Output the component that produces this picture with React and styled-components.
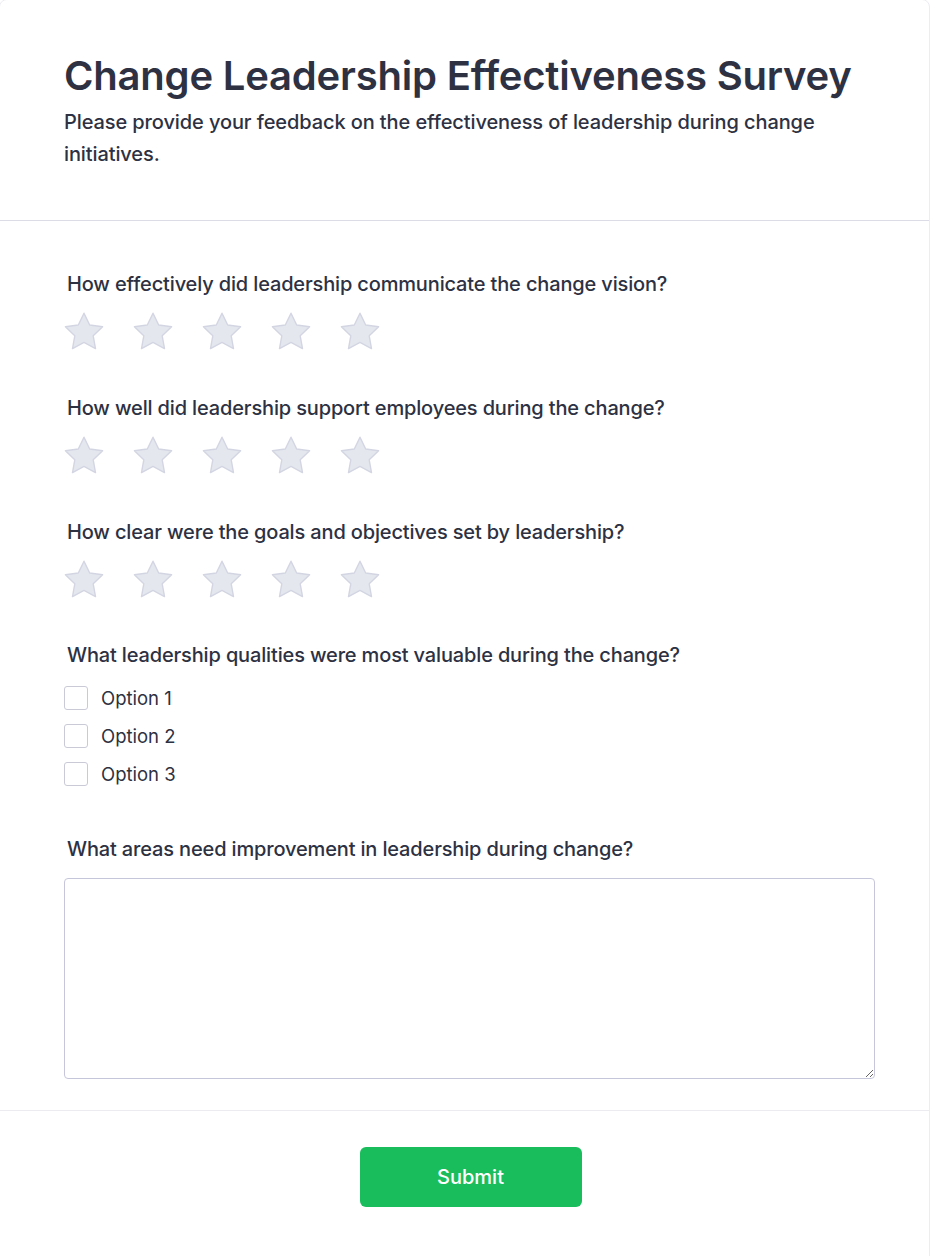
import React, { useState } from "react";
import styled, { createGlobalStyle } from "styled-components";

const GlobalStyle = createGlobalStyle`
  html, body {
    margin: 0;
    padding: 0;
    background: #fff;
  }
  body {
    font-family: Inter, "Noto Sans", Arial, sans-serif;
    color: #2d3142;
  }
  * { box-sizing: border-box; }
`;

const Card = styled.div`
  width: 931px;
  margin: -1px 0 0 -1px;
  background: #fff;
  border: 1px solid #ececf2;
  border-radius: 8px;
`;

const Header = styled.header`
  padding: 52px 64px 50px;
  border-bottom: 1px solid #dcdce6;
`;

const Title = styled.h1`
  margin: 0 0 6px;
  font-size: 40px;
  line-height: 48px;
  font-weight: 600;
  color: #2d3142;
  letter-spacing: -0.2px;
`;

const Subtitle = styled.p`
  margin: 0;
  font-size: 20px;
  line-height: 32px;
  font-weight: 500;
  letter-spacing: -0.1px;
  color: #2d3142;
`;

const Body = styled.div`
  padding: 49px 54px 31px 64px;
  border-bottom: 1px solid #ebebf0;
`;

const Question = styled.div`
  margin-bottom: ${(p) => p.$gap || 42}px;
`;

const Label = styled.div`
  padding-left: 3px;
  font-size: 20px;
  line-height: 28px;
  font-weight: 500;
  letter-spacing: -0.15px;
  color: #2d3142;
  margin-bottom: ${(p) => p.$gap || 14}px;
`;

const Stars = styled.div`
  display: flex;
  gap: 29px;
`;

const StarButton = styled.button`
  width: 40px;
  height: 40px;
  padding: 0;
  border: 0;
  background: none;
  cursor: pointer;
  display: flex;
  align-items: center;
  justify-content: center;
`;

const Options = styled.div`
  display: flex;
  flex-direction: column;
  gap: 14px;
`;

const OptionRow = styled.label`
  display: flex;
  align-items: center;
  gap: 13px;
  font-size: 18.5px;
  line-height: 24px;
  color: #2d3142;
  cursor: pointer;
`;

const Box = styled.span`
  width: 24px;
  height: 24px;
  border: 1px solid #c9cad6;
  border-radius: 3px;
  background: ${(p) => (p.$on ? "#19bd5c" : "#fff")};
`;

const TextArea = styled.textarea`
  display: block;
  width: 811px;
  height: 201px;
  border: 1px solid #c5c6da;
  border-radius: 4px;
  padding: 10px;
  font-family: inherit;
  font-size: 16px;
  resize: vertical;
`;

const Footer = styled.footer`
  display: flex;
  justify-content: center;
  padding: 36px 0 70px 12px;
`;

const Submit = styled.button`
  width: 222px;
  height: 60px;
  border: 0;
  border-radius: 6px;
  background: #1abd5c;
  color: #fff;
  font-family: inherit;
  font-size: 20px;
  font-weight: 500;
  cursor: pointer;
`;

const StarIcon = ({ on }) => (
  <svg width="40" height="40" viewBox="2 2 20 20">
    <path
      d="M12 2.6l2.85 5.9 6.45.9-4.7 4.5 1.15 6.4L12 17.2l-5.75 3.1 1.15-6.4-4.7-4.5 6.45-.9z"
      fill={on ? "#fbbf24" : "#e5e7ef"}
      stroke={on ? "#f59e0b" : "#d3d6e2"}
      strokeWidth="0.7"
      strokeLinejoin="round"
    />
  </svg>
);

const ratingQuestions = [
  "How effectively did leadership communicate the change vision?",
  "How well did leadership support employees during the change?",
  "How clear were the goals and objectives set by leadership?",
];

const Rating = ({ value, onChange }) => (
  <Stars>
    {[1, 2, 3, 4, 5].map((n) => (
      <StarButton key={n} onClick={() => onChange(n)}>
        <StarIcon on={n <= value} />
      </StarButton>
    ))}
  </Stars>
);

export default function App() {
  const [ratings, setRatings] = useState([0, 0, 0]);
  const [checked, setChecked] = useState([false, false, false]);

  return (
    <>
      <GlobalStyle />
      <Card>
        <Header>
          <Title>Change Leadership Effectiveness Survey</Title>
          <Subtitle>
            Please provide your feedback on the effectiveness of leadership during change
            initiatives.
          </Subtitle>
        </Header>
        <Body>
          {ratingQuestions.map((q, i) => (
            <Question key={q} $gap={i === 2 ? 41 : 42}>
              <Label>{q}</Label>
              <Rating
                value={ratings[i]}
                onChange={(v) => setRatings(ratings.map((r, j) => (j === i ? v : r)))}
              />
            </Question>
          ))}
          <Question $gap={49}>
            <Label $gap={17}>What leadership qualities were most valuable during the change?</Label>
            <Options>
              {["Option 1", "Option 2", "Option 3"].map((o, i) => (
                <OptionRow
                  key={o}
                  onClick={() => setChecked(checked.map((c, j) => (j === i ? !c : c)))}
                >
                  <Box $on={checked[i]} />
                  {o}
                </OptionRow>
              ))}
            </Options>
          </Question>
          <Label $gap={15}>What areas need improvement in leadership during change?</Label>
          <TextArea />
        </Body>
        <Footer>
          <Submit>Submit</Submit>
        </Footer>
      </Card>
    </>
  );
}
